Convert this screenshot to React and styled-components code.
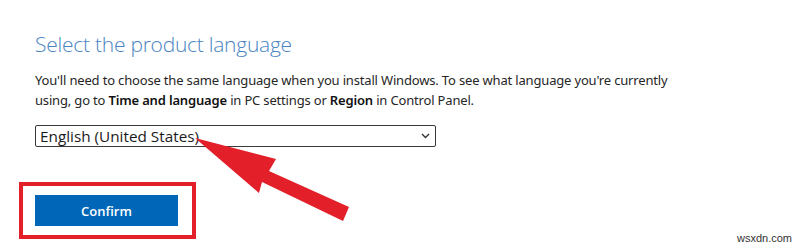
import React from "react";
import styled, { createGlobalStyle } from "styled-components";

const Global = createGlobalStyle`
  html, body { margin: 0; padding: 0; background: #fff; }
  body { font-family: "Open Sans", "Noto Sans", sans-serif; }
`;

const Page = styled.div`
  position: relative;
  width: 800px;
  height: 247px;
  overflow: hidden;
  background: #fff;
  padding: 30px 0 0 35px;
  box-sizing: border-box;
`;

const Heading = styled.h2`
  margin: 0;
  font-family: "Open Sans", sans-serif;
  font-weight: 300;
  font-size: 21px;
  line-height: 28px;
  color: #4a84c2;
  letter-spacing: -0.25px;
`;

const Para = styled.p`
  margin: 12px 0 0 0;
  width: 650px;
  font-family: "Noto Sans", sans-serif;
  font-size: 13px;
  line-height: 20px;
  letter-spacing: -0.17px;
  color: #262626;
  b { font-weight: 600; color: #111; }
`;

const Select = styled.div`
  margin-top: 15px;
  width: 401px;
  height: 22px;
  box-sizing: border-box;
  border: 1px solid #3a3a3a;
  border-radius: 2px;
  display: flex;
  align-items: center;
  justify-content: space-between;
  padding: 0 5px 0 4px;
  font-family: "Open Sans", sans-serif;
  font-size: 15.3px;
  color: #1a1a1a;
`;

const Chevron = styled.svg`
  width: 9px;
  height: 6px;
`;

const Highlight = styled.div`
  margin: 35px 0 0 -16px;
  width: 177px;
  height: 57px;
  box-sizing: border-box;
  border: 4px solid #e3202a;
  padding: 9px 0 0 12px;
`;

const Button = styled.div`
  width: 143px;
  height: 31px;
  background: #0067b8;
  color: #fff;
  display: flex;
  align-items: center;
  justify-content: center;
  font-family: "Open Sans", sans-serif;
  font-weight: 600;
  font-size: 13px;
`;

const ArrowOverlay = styled.svg`
  position: absolute;
  left: 0;
  top: 0;
  width: 800px;
  height: 247px;
  pointer-events: none;
`;

const Watermark = styled.div`
  position: absolute;
  right: 8px;
  bottom: 3px;
  font-family: "Liberation Sans", sans-serif;
  font-size: 11px;
  color: #333;
`;

export default function App() {
  return (
    <>
      <Global />
      <Page>
        <Heading>Select the product language</Heading>
        <Para>
          You'll need to choose the same language when you install Windows. To see what language you're currently
          using, go to <b>Time and language</b> in PC settings or <b>Region</b> in Control Panel.
        </Para>
        <Select>
          <span>English (United States)</span>
          <Chevron viewBox="0 0 9 6">
            <path d="M1 1 L4.5 4.5 L8 1" fill="none" stroke="#333" strokeWidth="1.4" />
          </Chevron>
        </Select>
        <Highlight>
          <Button>Confirm</Button>
        </Highlight>
        <ArrowOverlay viewBox="0 0 800 247">
          <polygon
            points="195,138 276,159 269,171 349,207 343,221 262,182 259,193"
            fill="#e3202a"
          />
        </ArrowOverlay>
        <Watermark>wsxdn.com</Watermark>
      </Page>
    </>
  );
}
